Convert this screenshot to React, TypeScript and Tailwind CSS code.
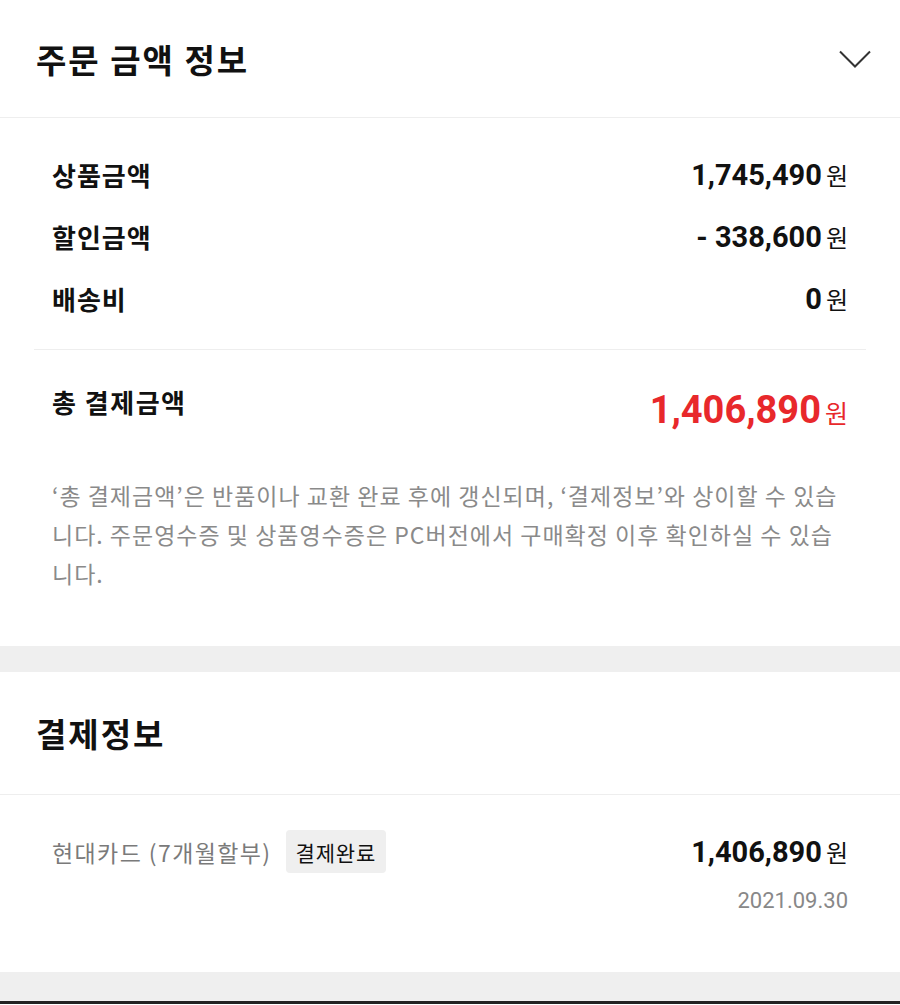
import React from "react";

const num = "font-['Roboto','Noto_Sans_CJK_KR',sans-serif]";

function Won({ value, className = "", wonClass = "" }: { value: string; className?: string; wonClass?: string }) {
  return (
    <div className="flex items-baseline">
      <span className={`${num} font-bold ${className}`}>{value}</span>
      <span className={`ml-[4px] font-normal ${wonClass}`}>원</span>
    </div>
  );
}

function Row({ label, value }: { label: string; value: string }) {
  return (
    <div className="flex h-[62px] items-center justify-between">
      <span className="text-[26px] font-bold leading-[36px] tracking-[1px] text-[#111]">{label}</span>
      <Won value={value} className="text-[29px] leading-[36px] text-[#111]" wonClass="text-[24px] text-[#111]" />
    </div>
  );
}

export default function App() {
  return (
    <div className="w-[900px] bg-white font-['Noto_Sans_CJK_KR',sans-serif] text-[#111]">
      {/* 주문 금액 정보 header */}
      <div className="flex h-[118px] items-center justify-between border-b border-[#eeeeee] pl-[36px] pr-[29px]">
        <h2 className="text-[33px] font-bold leading-[40px] tracking-[2px]">주문 금액 정보</h2>
        <svg width="32" height="18" viewBox="0 0 32 18" fill="none">
          <polyline points="1,1.5 16,16.5 31,1.5" stroke="#333" strokeWidth="2" />
        </svg>
      </div>

      {/* amounts */}
      <div className="px-[52px] pt-[26px]">
        <Row label="상품금액" value="1,745,490" />
        <Row label="할인금액" value="- 338,600" />
        <Row label="배송비" value="0" />
      </div>
      <div className="mx-[34px] mt-[19px] h-px bg-[#eeeeee]" />

      <div className="flex items-start justify-between px-[52px] pt-[34px]">
        <span className="text-[26px] font-bold leading-[36px] tracking-[1.5px]">총 결제금액</span>
        <div className="mt-[4px]">
          <Won value="1,406,890" className="text-[38px] leading-[44px] text-[#e8282b]" wonClass="text-[25px] text-[#e8282b]" />
        </div>
      </div>

      <p className="px-[52px] pb-[53px] pt-[44px] text-[23px] leading-[39px] tracking-[1px] text-[#8a8a8a] whitespace-nowrap">
        ‘총 결제금액’은 반품이나 교환 완료 후에 갱신되며, ‘결제정보’와 상이할 수 있습
        <br />
        니다. 주문영수증 및 상품영수증은 PC버전에서 구매확정 이후 확인하실 수 있습
        <br />
        니다.
      </p>

      <div className="h-[26px] bg-[#efefef]" />

      {/* 결제정보 */}
      <div className="flex h-[123px] items-center border-b border-[#eeeeee] pl-[36px]">
        <h2 className="text-[33px] font-bold leading-[40px] tracking-[2px]">결제정보</h2>
      </div>

      <div className="flex justify-between px-[52px] pb-[56px] pt-[35px]">
        <div className="flex h-[43px] items-center gap-[14px]">
          <span className="text-[23px] leading-[30px] tracking-[1.4px] text-[#7a7a7a]">현대카드 (7개월할부)</span>
          <span className="flex h-[43px] items-center rounded-[4px] bg-[#efefef] px-[10px] text-[21px] leading-[28px] tracking-[0.8px] text-[#111]">
            결제완료
          </span>
        </div>
        <div className="flex flex-col items-end">
          <div className="flex h-[43px] items-center">
            <Won value="1,406,890" className="text-[29px] leading-[36px] text-[#111]" wonClass="text-[24px] text-[#111]" />
          </div>
          <span className={`${num} mt-[13px] text-[22px] leading-[30px] text-[#888]`}>2021.09.30</span>
        </div>
      </div>

      <div className="h-[29px] bg-[#efefef]" />
      <div className="h-[3px] bg-[#222]" />
    </div>
  );
}
